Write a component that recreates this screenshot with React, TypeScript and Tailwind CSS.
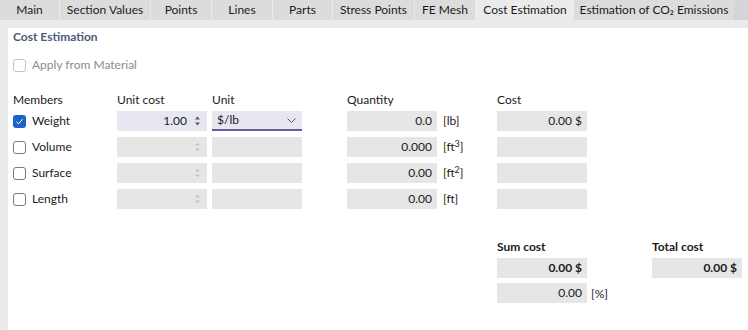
import React from "react";

const tabs = [
  { label: "Main", w: "w-[60px]" },
  { label: "Section Values", w: "w-[91px]" },
  { label: "Points", w: "w-[61px]" },
  { label: "Lines", w: "w-[61px]" },
  { label: "Parts", w: "w-[60px]" },
  { label: "Stress Points", w: "w-[82px]" },
  { label: "FE Mesh", w: "w-[61px]" },
  { label: "Cost Estimation", w: "w-[98px]" },
  { label: "Estimation of CO₂ Emissions", w: "w-[160px]" },
];

function CheckBox({ checked = false, disabled = false }: { checked?: boolean; disabled?: boolean }) {
  if (checked) {
    return (
      <span className="flex h-[13px] w-[13px] items-center justify-center rounded-[3px] bg-[#1d62c4]">
        <svg width="9" height="9" viewBox="0 0 9 9">
          <path d="M1.5 4.8 L3.6 6.8 L7.6 2.2" fill="none" stroke="#ffffff" strokeWidth="1" />
        </svg>
      </span>
    );
  }
  return (
    <span
      className={
        disabled
          ? "h-[13px] w-[13px] rounded-[3px] border border-[#c4c4c4] bg-white"
          : "h-[13px] w-[13px] rounded-[3px] border border-[#7a7a7a] bg-white"
      }
    />
  );
}

function Spinner({ active }: { active: boolean }) {
  const c = active ? "#5a5a5a" : "#c6c6c6";
  return (
    <svg width="7" height="12" viewBox="0 0 7 12" className="mr-[6px]">
      <path d="M3.5 1.5 L6 4.5 L1 4.5 Z" fill={c} />
      <path d="M3.5 10.5 L6 7.5 L1 7.5 Z" fill={c} />
    </svg>
  );
}

const rows = [
  { name: "Weight", checked: true, qty: "0.0", unit: "lb", sup: "", cost: "0.00 $" },
  { name: "Volume", checked: false, qty: "0.000", unit: "ft", sup: "3", cost: "" },
  { name: "Surface", checked: false, qty: "0.00", unit: "ft", sup: "2", cost: "" },
  { name: "Length", checked: false, qty: "0.00", unit: "ft", sup: "", cost: "" },
];

export default function App() {
  return (
    <div
      className="flex h-[330px] w-[748px] flex-col overflow-hidden bg-white text-[12px] text-[#1b1b1b]"
      style={{ fontFamily: "Lato, 'Liberation Sans', sans-serif" }}
    >
      {/* Tab bar */}
      <div className="flex h-[20px] shrink-0 bg-[#d6d6da]">
        {tabs.map((t, i) => (
          <div
            key={t.label}
            className={
              t.label === "Cost Estimation"
                ? `${t.w} flex shrink-0 items-center justify-center whitespace-nowrap bg-[#ebebeb] leading-none`
                : `${t.w} flex shrink-0 items-center justify-center whitespace-nowrap bg-[#dcdcdc] leading-none` +
                  (i === tabs.length - 1 ? "" : " border-r border-[#e9e9e9]")
            }
          >
            {t.label}
          </div>
        ))}
      </div>
      <div className="h-[8px] shrink-0 bg-[#ebebeb]" />

      <div className="flex flex-1">
        <div className="w-[8px] bg-[#ebebeb]" />
        <div className="flex flex-1 flex-col px-[5px]">
          <div className="flex h-[18px] items-center font-bold text-[#4d5a78]">Cost Estimation</div>

          <div className="mt-[10px] flex h-[18px] items-center gap-[6px] text-[#8c8c8c]">
            <CheckBox disabled />
            <span>Apply from Material</span>
          </div>

          {/* Column headers */}
          <div className="mt-[17px] flex h-[18px] items-center">
            <span className="w-[104px]">Members</span>
            <span className="w-[95px]">Unit cost</span>
            <span className="w-[135px]">Unit</span>
            <span className="w-[150px]">Quantity</span>
            <span>Cost</span>
          </div>

          <div className="mt-[2px] flex flex-col gap-[6px]">
            {rows.map((r) => (
              <div key={r.name} className="flex h-[20px] items-center">
                <div className="flex w-[104px] items-center gap-[6px]">
                  <CheckBox checked={r.checked} />
                  <span>{r.name}</span>
                </div>
                <div
                  className={
                    r.checked
                      ? "flex h-[20px] w-[90px] items-center justify-end bg-[#e6e7f1]"
                      : "flex h-[20px] w-[90px] items-center justify-end bg-[#e6e6e6]"
                  }
                >
                  {r.checked && <span className="mr-[7px]">1.00</span>}
                  <Spinner active={r.checked} />
                </div>
                {r.checked ? (
                  <div className="ml-[5px] flex h-[20px] w-[90px] items-center border-b-2 border-[#5f60a3] bg-[#e6e7f1] pl-[5px] pr-[6px]">
                    <span>$/lb</span>
                    <svg width="9" height="5" viewBox="0 0 9 5" className="ml-auto">
                      <path d="M0.5 0.5 L4.5 4.5 L8.5 0.5" fill="none" stroke="#5a5a5a" strokeWidth="1" />
                    </svg>
                  </div>
                ) : (
                  <div className="ml-[5px] h-[20px] w-[90px] bg-[#e6e6e6]" />
                )}
                <div className="ml-[45px] flex h-[20px] w-[90px] items-center justify-end bg-[#e6e6e6] pr-[5px]">
                  {r.qty}
                </div>
                <span className="w-[60px] pl-[6px]">
                  [{r.unit}
                  {r.sup && <sup className="text-[9px]">{r.sup}</sup>}]
                </span>
                <div className="flex h-[20px] w-[90px] items-center justify-end bg-[#e6e6e6] pr-[5px]">
                  {r.cost}
                </div>
              </div>
            ))}
          </div>

          {/* Sums */}
          <div className="mt-[29px] flex">
            <div className="ml-[484px] flex w-[90px] flex-col">
              <div className="flex h-[18px] items-center font-bold">Sum cost</div>
              <div className="mt-[2px] flex h-[20px] items-center justify-end bg-[#e6e6e6] pr-[5px] font-bold">
                0.00 $
              </div>
              <div className="relative mt-[5px] flex h-[20px] items-center justify-end bg-[#e6e6e6] pr-[5px]">
                0.00
                <span className="absolute left-[94px] top-[2px]">[%]</span>
              </div>
            </div>
            <div className="ml-[65px] flex w-[90px] flex-col">
              <div className="flex h-[18px] items-center font-bold">Total cost</div>
              <div className="mt-[2px] flex h-[20px] items-center justify-end bg-[#e6e6e6] pr-[5px] font-bold">
                0.00 $
              </div>
            </div>
          </div>
        </div>
      </div>
    </div>
  );
}
